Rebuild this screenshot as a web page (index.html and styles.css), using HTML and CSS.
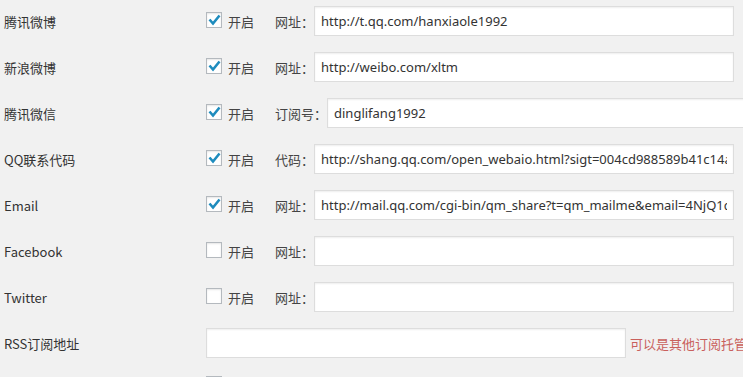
FILE: index.html
```html
<!DOCTYPE html>
<html lang="zh-CN">
<head>
  <meta charset="UTF-8" />
  <title>社交设置</title>
  <link rel="stylesheet" href="styles.css">
</head>
<body>

  <div class="rows">
    <div class="row">
      <div class="name">腾讯微博</div>
      <label class="check"><span class="box on"><svg viewBox="0 0 16 16"><path d="M3.5 7.5 L7 11.5 L13.5 3.5"/></svg></span>开启</label>
      <span class="field">网址：</span>
      <input class="text" type="text" value="http://t.qq.com/hanxiaole1992" />
    </div>
    <div class="row">
      <div class="name">新浪微博</div>
      <label class="check"><span class="box on"><svg viewBox="0 0 16 16"><path d="M3.5 7.5 L7 11.5 L13.5 3.5"/></svg></span>开启</label>
      <span class="field">网址：</span>
      <input class="text" type="text" value="http://weibo.com/xltm" />
    </div>
    <div class="row">
      <div class="name">腾讯微信</div>
      <label class="check"><span class="box on"><svg viewBox="0 0 16 16"><path d="M3.5 7.5 L7 11.5 L13.5 3.5"/></svg></span>开启</label>
      <span class="field">订阅号：</span>
      <input class="text" type="text" value="dinglifang1992" />
    </div>
    <div class="row">
      <div class="name">QQ联系代码</div>
      <label class="check"><span class="box on"><svg viewBox="0 0 16 16"><path d="M3.5 7.5 L7 11.5 L13.5 3.5"/></svg></span>开启</label>
      <span class="field">代码：</span>
      <input class="text" type="text" value="http://shang.qq.com/open_webaio.html?sigt=004cd988589b41c14a6ef" />
    </div>
    <div class="row">
      <div class="name">Email</div>
      <label class="check"><span class="box on"><svg viewBox="0 0 16 16"><path d="M3.5 7.5 L7 11.5 L13.5 3.5"/></svg></span>开启</label>
      <span class="field">网址：</span>
      <input class="text" type="text" value="http://mail.qq.com/cgi-bin/qm_share?t=qm_mailme&amp;email=4NjQ1dXW" />
    </div>
    <div class="row">
      <div class="name">Facebook</div>
      <label class="check"><span class="box"></span>开启</label>
      <span class="field">网址：</span>
      <input class="text" type="text" value="" />
    </div>
    <div class="row">
      <div class="name">Twitter</div>
      <label class="check"><span class="box"></span>开启</label>
      <span class="field">网址：</span>
      <input class="text" type="text" value="" />
    </div>
    <div class="row">
      <div class="name">RSS订阅地址</div>
      <input class="text" type="text" value="" />
      <span class="hint">可以是其他订阅托管服务的地址</span>
    </div>
    <div class="row last">
      <div class="name"></div>
      <label class="check"><span class="box"></span>开启</label>
    </div>
  </div>

</body>
</html>
```

FILE: styles.css
```css
body {
  margin: 0;
  background: #f1f1f1;
  font-family: "Noto Sans CJK SC", "Noto Sans", sans-serif;
  font-size: 13px;
  color: #444;
  overflow: hidden;
}
.rows {
  margin-top: -2px;
  padding-left: 4px;
}
.row {
  display: flex;
  align-items: center;
  height: 46px;
  white-space: nowrap;
}
.row.last {
  align-items: flex-start;
  padding-top: 9px;
  box-sizing: border-box;
}
.name {
  width: 202px;
  flex: none;
  color: #333;
}
.check {
  display: flex;
  align-items: center;
  width: 69px;
  flex: none;
}
.box {
  width: 14px;
  height: 14px;
  border: 1px solid #b4b9be;
  background: #fff;
  box-shadow: inset 0 1px 2px rgba(0, 0, 0, 0.1);
  margin-right: 6px;
  margin-bottom: 2px;
  flex: none;
}
.box svg {
  display: block;
  width: 16px;
  height: 16px;
  margin: -1px 0 0 -1px;
}
.box svg path {
  fill: none;
  stroke: #1e8cbe;
  stroke-width: 2.6;
}
.field {
  flex: none;
  color: #444;
}
.text {
  width: 420px;
  height: 30px;
  box-sizing: border-box;
  flex: none;
  border: 1px solid #ddd;
  box-shadow: inset 0 1px 2px rgba(0, 0, 0, 0.07);
  background: #fff;
  padding: 0 6px;
  font-family: "Noto Sans", "Noto Sans CJK SC", sans-serif;
  font-size: 13px;
  color: #333;
  outline: none;
}
.hint {
  margin-left: 4px;
  color: #c9605c;
  font-size: 13px;
}
```
